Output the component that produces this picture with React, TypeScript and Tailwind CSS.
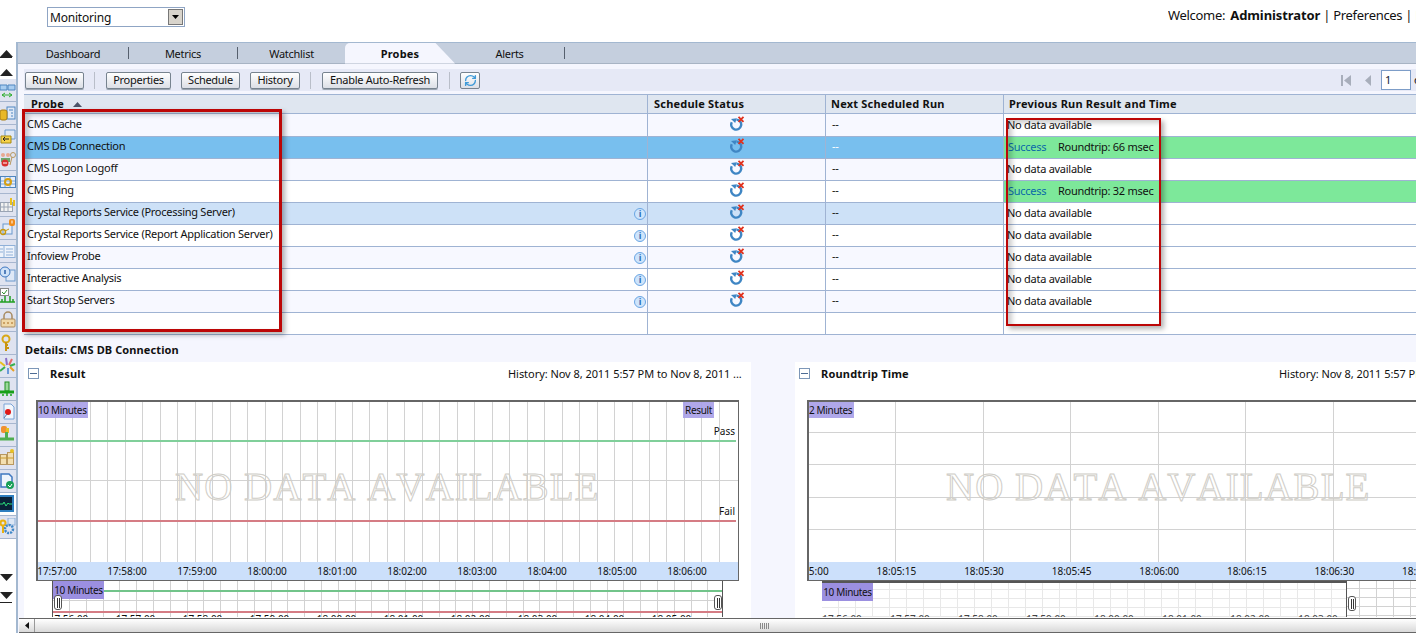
import { RefreshCw } from "lucide-react"
import type { ReactNode } from "react"

const probes = [
  { name: "CMS Cache", info: false, result: null },
  { name: "CMS DB Connection", info: false, result: "66" },
  { name: "CMS Logon Logoff", info: false, result: null },
  { name: "CMS Ping", info: false, result: "32" },
  { name: "Crystal Reports Service (Processing Server)", info: true, result: null },
  { name: "Crystal Reports Service (Report Application Server)", info: true, result: null },
  { name: "Infoview Probe", info: true, result: null },
  { name: "Interactive Analysis", info: true, result: null },
  { name: "Start Stop Servers", info: true, result: null },
]

const railIcons: ReactNode[] = [
  <g key="1"><path d="M0 4h7v5H0zM8 4h7v5H8z" fill="#a9cdf0" stroke="#4f86c0" /><path d="M2 14h10M2 14l3-2M2 14l3 2M12 14l-3-2M12 14l-3 2" stroke="#2fae2f" fill="none" /></g>,
  <g key="2"><rect x="7" y="3" width="8" height="12" fill="#dfe8f6" stroke="#4f86c0" /><path d="M9 6h4M11 9h2M11 12h2" stroke="#4f86c0" /><rect x="0" y="6" width="7" height="10" rx="2" fill="#e8b828" stroke="#a87c10" /></g>,
  <g key="3"><path d="M5 3h10v9H5z" fill="#dfe8f6" stroke="#6a98cc" /><path d="M1 9h10v7H1z" fill="#f6d34a" stroke="#a88a10" /><path d="M3 12h6M3 12l2-2M3 12l2 2" stroke="#222" fill="none" /></g>,
  <g key="4"><circle cx="3" cy="5" r="2" fill="#e8a890" /><circle cx="8" cy="5" r="2" fill="#e8a890" /><path d="M1 8h9v4H1z" fill="#6aa86a" /><circle cx="5" cy="13" r="3.5" fill="#d83030" /><path d="M3 13h4" stroke="#fff" /><circle cx="13" cy="5" r="2.5" fill="none" stroke="#b89860" /><path d="M12 7l-2 8" stroke="#b89860" /></g>,
  <g key="5"><rect x="0.5" y="3.5" width="15" height="11" fill="#e6eefa" stroke="#4f86c0" /><path d="M5 4v10M10 4v10M1 8h14M1 11h14" stroke="#7aa4d8" /><circle cx="8" cy="9" r="3" fill="none" stroke="#d8a010" strokeWidth="2" /></g>,
  <g key="6"><rect x="0.5" y="6.5" width="12" height="9" fill="#f2f2f2" stroke="#9aa4b4" /><path d="M4 7v8M8 7v8M1 11h11" stroke="#9aa4b4" /><path d="M10 2h2v7h-2zM13 4h2v6h-2z" fill="#e8c020" /></g>,
  <g key="7"><rect x="3" y="5" width="9" height="10" fill="#e4ecf8" stroke="#6a98cc" /><rect x="9" y="0" width="6" height="7" rx="2" fill="#f08c1c" /><rect x="11.5" y="1.5" width="1" height="3" fill="#fff" /><circle cx="3" cy="13" r="2.5" fill="none" stroke="#c89a10" strokeWidth="1.5" /><path d="M5 12l4-2" stroke="#c89a10" /></g>,
  <g key="8"><rect x="-2" y="3.5" width="17" height="12" fill="#eef3fb" stroke="#8fb0d8" /><path d="M4 4v11" stroke="#8fb0d8" /><path d="M6 7h7M6 10h7M6 13h7M-1 7h4M-1 10h4" stroke="#8fb0d8" /></g>,
  <g key="9"><rect x="6" y="5" width="9" height="11" fill="#dfe8f6" stroke="#6a98cc" /><circle cx="5" cy="7" r="5" fill="#cfe2f8" stroke="#3f78c0" /><path d="M5 5v4" stroke="#2a5ea8" strokeWidth="1.5" /></g>,
  <g key="10"><rect x="0.5" y="0.5" width="8" height="7" fill="#fff" stroke="#888" /><path d="M2 4l2 2 3-4" stroke="#309030" fill="none" /><path d="M0 14h15M5 8v6M10 8v6M2 11v3M13 11v3" stroke="#22a022" strokeWidth="1.5" /></g>,
  <g key="11"><path d="M4 8V5a4 4 0 0 1 8 0v3" fill="none" stroke="#a88a60" strokeWidth="1.5" /><rect x="1" y="8" width="14" height="8" rx="1" fill="#f0d8a8" stroke="#a88a60" /><path d="M3 12h2M7 12h2M11 12h2" stroke="#a86a20" /></g>,
  <g key="12"><circle cx="6" cy="5" r="3.5" fill="none" stroke="#d8a818" strokeWidth="2" /><path d="M6 8v9M6 14h3M6 11h2" stroke="#c89410" strokeWidth="2" /></g>,
  <g key="13"><path d="M7 8l-1-7" stroke="#8a70c8" strokeWidth="2" /><path d="M9 8l3-6" stroke="#e86a6a" strokeWidth="2" /><path d="M5 9L0 5" stroke="#e8c020" strokeWidth="2" /><path d="M10 9l5-2" stroke="#38b050" strokeWidth="2" /><path d="M5 10l-5 4" stroke="#38b050" strokeWidth="2" /><path d="M10 10l4 4" stroke="#e8a020" strokeWidth="2" /><path d="M8 11v6" stroke="#6a9ad8" strokeWidth="2" /></g>,
  <g key="14"><rect x="5" y="2" width="4" height="9" fill="#9ad89a" stroke="#1f8f1f" /><path d="M0 12h14" stroke="#18a018" strokeWidth="3" /><path d="M7 11v5M3 14v2M11 14v2" stroke="#18a018" strokeWidth="1.5" /></g>,
  <g key="15"><path d="M4 1h7l3 3v12H4z" fill="#f2f6fc" stroke="#7aa4d8" /><circle cx="8" cy="9" r="3" fill="#e01818" /><path d="M7 11l-3 4" stroke="#5a78a8" /></g>,
  <g key="16"><rect x="1" y="0" width="6" height="7" rx="2" fill="#f09030" /><path d="M6 2h3v5H6z" fill="#e8c020" /><rect x="5" y="6" width="3" height="6" fill="#4fae4f" /><path d="M0 13h14" stroke="#4fae4f" strokeWidth="3" /></g>,
  <g key="17"><rect x="0.5" y="5.5" width="6" height="10" fill="#f3dfb0" stroke="#b89860" /><rect x="7.5" y="3.5" width="6" height="12" fill="#f3dfb0" stroke="#b89860" /><path d="M0 9h14" stroke="#c89a30" /><circle cx="12" cy="2" r="2" fill="#e8c020" /></g>,
  <g key="18"><path d="M1 2h8l3 3v10H1z" fill="#eef4fc" stroke="#3f78c0" strokeWidth="1.5" /><circle cx="10" cy="13" r="4" fill="#18a058" /><path d="M8 13l2 2 2-3" stroke="#fff" fill="none" /></g>,
  <g key="19"><rect x="-2" y="1" width="15" height="15" fill="#0a2238" stroke="#2f7fc0" strokeWidth="2" /><path d="M0 9h3l1-2 2 4 2-3 1 1h3" stroke="#28d878" fill="none" /></g>,
  <g key="20"><rect x="8" y="0" width="7" height="7" fill="#dce6f4" stroke="#8fb0d8" /><circle cx="3" cy="5" r="2.5" fill="none" stroke="#e8b010" strokeWidth="2" /><path d="M3 7v8" stroke="#e8b010" strokeWidth="2" /><circle cx="9" cy="11" r="4" fill="none" stroke="#3f88c8" strokeWidth="2.5" strokeDasharray="2 1" /></g>,
]

function Triangle({ down = false }: { down?: boolean }) {
  return (
    <svg width="13" height="7" viewBox="0 0 13 7" className="block">
      <path d={down ? "M0 0h13L6.5 7z" : "M6.5 0L13 7H0z"} fill="#222" />
    </svg>
  )
}

function LeftRail() {
  return (
    <div className="flex w-[16px] shrink-0 flex-col overflow-hidden bg-white">
      <div className="flex h-[37px] flex-col">
        <div className="mt-[8px]">
          <Triangle />
        </div>
        <div className="h-px w-[12px] bg-[#222]" />
        <div className="mt-[11px]">
          <Triangle />
        </div>
      </div>
      {railIcons.map((icon, i) => (
        <div
          key={i}
          className={`flex h-[23px] shrink-0 items-center overflow-hidden border-b border-[#a7b6cf] ${
            i === 18 ? "bg-white" : "bg-[#dfe3f0]"
          }`}
        >
          <svg width="16" height="18" viewBox="0 0 16 18" className="block">
            {icon}
          </svg>
        </div>
      ))}
      <div className="mt-[35px]">
        <Triangle down />
      </div>
      <div className="mt-[11px]">
        <Triangle down />
      </div>
      <div className="mt-[3px] h-px w-[12px] bg-[#222]" />
    </div>
  )
}

function Tab({ label, className, sep = true }: { label: string; className: string; sep?: boolean }) {
  return (
    <div className={`flex h-[20px] shrink-0 items-center justify-center ${className}`}>
      <span className="flex-1 pt-[2px] text-center">{label}</span>
      {sep && <span className="h-[12px] w-px bg-[#56606e]" />}
    </div>
  )
}

function ToolButton({ label, className }: { label: string; className: string }) {
  return (
    <button
      className={`flex h-[17px] items-center justify-center rounded-[2px] border border-[#77838f] bg-gradient-to-b from-white to-[#dcdfe6] text-[11px] text-[#111] shadow-[0_1px_0_#9aa4b0] ${className}`}
    >
      {label}
    </button>
  )
}

function ToolSep({ className }: { className: string }) {
  return <span className={`h-[17px] w-px bg-[#b9bec9] ${className}`} />
}

function Toolbar() {
  return (
    <div className="mt-[5px] flex h-[22px] shrink-0 items-center bg-[#e6e9f6] pl-px">
      <ToolButton label="Run Now" className="w-[59px]" />
      <ToolSep className="ml-[10px]" />
      <ToolButton label="Properties" className="ml-[11px] w-[65px]" />
      <ToolButton label="Schedule" className="ml-[10px] w-[59px]" />
      <ToolButton label="History" className="ml-[10px] w-[50px]" />
      <ToolSep className="ml-[10px]" />
      <ToolButton label="Enable Auto-Refresh" className="ml-[11px] w-[116px]" />
      <ToolSep className="ml-[11px]" />
      <button className="ml-[10px] flex h-[17px] w-[20px] items-center justify-center rounded-[2px] border border-[#77838f] bg-gradient-to-b from-white to-[#dcdfe6]">
        <RefreshCw size={13} strokeWidth={2.5} className="text-[#3f9ad8]" />
      </button>
      <svg width="10" height="11" viewBox="0 0 10 11" className="ml-auto">
        <path d="M0 0h2v11H0zM10 0v11L3 5.5z" fill="#a8aebb" />
      </svg>
      <svg width="6" height="11" viewBox="0 0 6 11" className="ml-[14px]">
        <path d="M6 0v11L0 5.5z" fill="#a8aebb" />
      </svg>
      <div className="ml-[10px] flex h-[20px] w-[30px] items-center border border-[#7d9dc8] bg-white pl-[3px] text-[11px] text-[#123]">
        1
      </div>
      <span className="ml-[3px] w-[2px] overflow-hidden text-[11px]">of</span>
    </div>
  )
}

function ScheduleIcon() {
  return (
    <svg width="16" height="15" viewBox="0 0 16 15" className="-mt-[4px] block">
      <path d="M7.5 3.6A5 5 0 1 1 2.8 6.2" fill="none" stroke="#3f86c4" strokeWidth="2.4" />
      <path d="M2 3l5.8-.8-1.6 4.8z" fill="#3f86c4" />
      <path d="M9.5 0.8l5 5M14.5 0.8l-5 5" stroke="#e0301c" strokeWidth="1.8" />
    </svg>
  )
}

function InfoIcon() {
  return (
    <span className="mr-[1px] mt-[2px] flex h-[12px] w-[12px] items-center justify-center rounded-full border border-[#6aa6e4] bg-[#cfe4fb] text-[9px] font-bold leading-none text-[#2d6fb8]">
      i
    </span>
  )
}

const cell = "flex items-center border-r border-[#9fb3d3]"

function ProbeTable() {
  return (
    <div className="mt-[3px] shrink-0 text-[11px] text-[#111]">
      <div className="grid h-[20px] grid-cols-[624px_178px_178px_1fr] border-y border-[#9fb3d3] bg-[#dfe6f0] font-bold tracking-[0.2px]">
        <div className={`${cell} pl-[7px]`}>
          Probe
          <svg width="9" height="5" viewBox="0 0 9 5" className="ml-[9px]">
            <path d="M4.5 0L9 5H0z" fill="#4c5468" />
          </svg>
        </div>
        <div className={`${cell} pl-[6px]`}>Schedule Status</div>
        <div className={`${cell} pl-[5px]`}>Next Scheduled Run</div>
        <div className="flex items-center pl-[5px]">Previous Run Result and Time</div>
      </div>
      {[...probes, null].map((p, i) => {
        const selected = i === 1
        const hover = i === 4
        const bg = selected ? "bg-[#78bfee]" : hover ? "bg-[#cde1f7]" : i % 2 === 0 ? "bg-[#f7f8ff]" : "bg-white"
        return (
          <div
            key={i}
            className={`grid grid-cols-[624px_178px_178px_1fr] border-b border-[#9fb3d3] ${i === 0 ? "h-[23px]" : "h-[22px]"} ${bg}`}
          >
            <div className={`${cell} justify-between pb-[2px] pl-[3px]`}>
              <span>{p?.name}</span>
              {p?.info && <InfoIcon />}
            </div>
            <div className={`${cell} justify-center`}>{p && <ScheduleIcon />}</div>
            <div className={`${cell} pb-[2px] pl-[6px] ${selected ? "text-white" : ""}`}>{p && "--"}</div>
            {p?.result ? (
              <div className="flex items-center bg-[#7de89a] pl-[4px]">
                <span className="w-[50px] text-[#0a68a8]">Success</span>
                <span>Roundtrip: {p.result} msec</span>
              </div>
            ) : (
              <div className="flex items-center bg-white pl-[3px]">{p && "No data available"}</div>
            )}
          </div>
        )
      })}
    </div>
  )
}

function Handle({ className }: { className: string }) {
  return (
    <span className={`absolute flex h-[15px] w-[8px] items-center justify-center gap-px rounded-[3px] border border-[#555] bg-white ${className}`}>
      <span className="h-[10px] w-px bg-[#333]" />
      <span className="h-[10px] w-px bg-[#333]" />
    </span>
  )
}

function range(start: number, end: number, step: number) {
  const out: number[] = []
  for (let x = start; x < end; x += step) out.push(Math.round(x))
  return out
}

function Grid({
  xs,
  ys,
  width,
  height,
  color = "#d2d2d2",
}: {
  xs: number[]
  ys: number[]
  width: number
  height: number
  color?: string
}) {
  return (
    <svg width={width} height={height} className="absolute left-0 top-0" shapeRendering="crispEdges">
      {xs.map((x) => (
        <line key={x} x1={x + 0.5} x2={x + 0.5} y1={0} y2={height} stroke={color} />
      ))}
      {ys.map((y) => (
        <line key={y} x1={0} x2={width} y1={y + 0.5} y2={y + 0.5} stroke={color} />
      ))}
    </svg>
  )
}

function NoData({ className }: { className: string }) {
  return (
    <span
      className={`absolute whitespace-nowrap text-[39px] leading-none tracking-[1px] text-transparent [font-family:'Liberation_Serif',serif] [font-kerning:none] [-webkit-text-stroke:1px_#cfcdc7] ${className}`}
    >
      NO DATA AVAILABLE
    </span>
  )
}

function PurpleLabel({ children, className }: { children: ReactNode; className: string }) {
  return (
    <span className={`absolute top-0 flex h-[16px] items-center whitespace-nowrap bg-[#a79ee8]/90 text-[10px] tracking-[-0.35px] text-[#111] ${className}`}>
      {children}
    </span>
  )
}

function Panel({ title, children }: { title: string; children: ReactNode }) {
  return (
    <div className="flex w-[727px] shrink-0 flex-col overflow-hidden bg-white">
      <div className="flex h-[38px] shrink-0 items-start pt-[4px] text-[11px]">
        <span className="ml-[4px] mt-[2px] flex h-[11px] w-[11px] items-center justify-center border border-[#7d97b8]">
          <span className="h-px w-[7px] bg-[#4d6c94]" />
        </span>
        <span className="ml-[11px] font-bold tracking-[0.2px]">{title}</span>
        <span className="ml-auto mr-[10px] w-[233px] whitespace-nowrap text-right tracking-[-0.05px] text-[#111]">
          History: Nov 8, 2011 5:57 PM to Nov 8, 2011 ...
        </span>
      </div>
      {children}
    </div>
  )
}

function ResultPanel() {
  const labels = ["17:57:00", "17:58:00", "17:59:00", "18:00:00", "18:01:00", "18:02:00", "18:03:00", "18:04:00", "18:05:00", "18:06:00"]
  const ticks = ["17:56:00", "17:57:00", "17:58:00", "17:59:00", "18:00:00", "18:01:00", "18:02:00", "18:03:00", "18:04:00", "18:05:00"]
  return (
    <Panel title="Result">
      <div className="ml-[12px] flex h-[181px] w-[703px] shrink-0 flex-col overflow-hidden border-b border-l-2 border-r border-t-2 border-[#666]">
        <div className="relative h-[160px] shrink-0 overflow-hidden bg-white text-[10px] tracking-normal">
          <Grid xs={range(17, 698, 17.47)} ys={[78]} width={700} height={160} />
          <div className="absolute left-0 top-[38px] h-[2px] w-[698px] bg-[#80cf9a]" />
          <div className="absolute left-0 top-[118px] h-[2px] w-[698px] bg-[#d57c84]" />
          <NoData className="left-[137px] top-[65px]" />
          <PurpleLabel className="left-0 w-[50px]">10 Minutes</PurpleLabel>
          <PurpleLabel className="left-[645px] w-[31px] justify-center">Result</PurpleLabel>
          <span className="absolute right-[3px] top-[22px]">Pass</span>
          <span className="absolute right-[3px] top-[102px]">Fail</span>
        </div>
        <div className="-ml-[16px] flex h-[18px] shrink-0 items-center bg-[#cce0fb] pt-px text-[10px] tracking-normal text-[#111]">
          {labels.map((l) => (
            <span key={l} className="w-[70px] shrink-0 text-center">
              {l}
            </span>
          ))}
        </div>
      </div>
      <div className="relative ml-[28px] h-[36px] w-[671px] shrink-0 overflow-hidden border-l border-r border-[#555] bg-white text-[10px] tracking-normal">
        <Grid xs={range(16, 670, 16.8)} ys={[19]} width={670} height={36} />
        <div className="absolute left-0 top-[9px] h-[2px] w-full bg-[#72c48a]" />
        <div className="absolute left-0 top-[30px] h-[2px] w-full bg-[#d57c84]" />
        <PurpleLabel className="left-0 !h-[18px] w-[51px] justify-center !bg-[#9b8fe0]">10 Minutes</PurpleLabel>
        <Handle className="left-[1px] top-[14px]" />
        <Handle className="right-0 top-[14px]" />
        <div className="absolute left-[-18px] top-[31px] flex">
          {ticks.map((t) => (
            <span key={t} className="w-[67px] text-center">
              {t}
            </span>
          ))}
        </div>
      </div>
    </Panel>
  )
}

function RoundtripPanel() {
  const labels = ["18:05:00", "18:05:15", "18:05:30", "18:05:45", "18:06:00", "18:06:15", "18:06:30", "18:06:45"]
  const ticks = ["17:56:00", "17:57:00", "17:58:00", "17:59:00", "18:00:00", "18:01:00", "18:02:00", "18:03:00", "18:04:00", "18:05:00"]
  return (
    <Panel title="Roundtrip Time">
      <div className="ml-[12px] flex h-[181px] w-[703px] shrink-0 flex-col overflow-hidden border-b border-l-2 border-r border-t-2 border-[#666]">
        <div className="relative h-[160px] shrink-0 overflow-hidden bg-white text-[10px] tracking-normal">
          <Grid xs={range(86, 700, 87.6)} ys={[30, 62, 95, 127]} width={700} height={160} />
          <NoData className="left-[137px] top-[65px]" />
          <PurpleLabel className="left-0 w-[45px]">2 Minutes</PurpleLabel>
        </div>
        <div className="flex h-[18px] shrink-0 items-center overflow-hidden bg-[#cce0fb] pt-px text-[10px] tracking-normal text-[#111]">
          <div className="-ml-[44px] flex">
            {labels.map((l) => (
              <span key={l} className="w-[87.6px] shrink-0 text-center">
                {l}
              </span>
            ))}
          </div>
        </div>
      </div>
      <div className="ml-[27px] flex h-[36px] shrink-0 text-[10px] tracking-normal">
        <div className="relative h-full w-[525px] shrink-0 overflow-hidden border-r border-t-2 border-[#555] bg-white">
          <Grid xs={range(16, 524, 17)} ys={[6, 15, 24, 33]} width={524} height={36} color="#e8e8e8" />
          <PurpleLabel className="left-0 !h-[18px] w-[51px] justify-center !bg-[#9b8fe0]">10 Minutes</PurpleLabel>
          <div className="absolute left-[-14px] top-[29px] flex text-[#444]">
            {ticks.map((t) => (
              <span key={t} className="w-[68px] text-center">
                {t}
              </span>
            ))}
          </div>
        </div>
        <div className="relative h-full w-[175px] shrink-0 overflow-hidden bg-white">
          <Grid xs={range(12, 175, 17)} ys={[7, 16, 25, 34]} width={175} height={36} />
          <Handle className="left-[1px] top-[15px]" />
        </div>
      </div>
    </Panel>
  )
}

function Scrollbar() {
  return (
    <div className="ml-px flex h-[15px] shrink-0 border-y border-[#666] bg-gradient-to-b from-white to-[#d9d9d9]">
      <div className="flex w-[16px] shrink-0 items-center justify-center border-r border-[#999]">
        <svg width="4" height="7" viewBox="0 0 4 7">
          <path d="M4 0v7L0 3.5z" fill="#111" />
        </svg>
      </div>
      <div className="flex w-[1458px] shrink-0 items-center justify-center gap-px rounded-l-[3px]">
        {[0, 1, 2, 3, 4].map((i) => (
          <span key={i} className="h-[6px] w-px bg-[#8a8a8a]" />
        ))}
      </div>
    </div>
  )
}

export default function App() {
  return (
    <div className="relative flex h-[633px] w-[1416px] flex-col overflow-hidden bg-white text-[11px] tracking-[-0.27px] text-[#111] [font-family:'Noto_Sans',sans-serif]">
      <header className="flex h-[42px] shrink-0 items-start">
        <div className="ml-[47px] mt-[7px] flex h-[20px] w-[138px] items-center border border-[#8fa5c4] pl-[2px] text-[12px] tracking-[-0.2px]">
          <span className="flex-1 pt-px">Monitoring</span>
          <span className="flex h-[16px] w-[15px] items-center justify-center border border-[#777] bg-[#d8d4cc]">
            <svg width="7" height="4" viewBox="0 0 7 4">
              <path d="M0 0h7L3.5 4z" fill="#000" />
            </svg>
          </span>
          <span className="w-px" />
        </div>
        <div className="ml-auto mt-[6px] w-[248px] overflow-hidden whitespace-nowrap text-[13px] leading-[18px] tracking-[-0.3px]">
          Welcome: <b className="ml-[2px] tracking-[-0.1px]">Administrator</b> | Preferences | Help
        </div>
      </header>

      <div className="flex min-h-0 flex-1">
        <LeftRail />
        <main className="flex min-w-0 flex-1 flex-col border-l-2 border-t border-[#a3b8d0] bg-[#f5f6fe]">
          <div className="flex h-[21px] shrink-0 items-center border-b border-[#a8b4c4] bg-[#c5cfde] text-[11px]">
            <Tab label="Dashboard" className="w-[111px]" />
            <Tab label="Metrics" className="w-[109px]" />
            <Tab label="Watchlist" className="w-[107px]" sep={false} />
            <div className="flex h-[21px] w-[110px] shrink-0 items-center justify-center rounded-tl-[5px] bg-[#f5f6fe] pt-[3px] font-bold tracking-[0.2px] [clip-path:polygon(0_0,90px_0,110px_100%,0_100%)]">
              Probes
            </div>
            <Tab label="Alerts" className="w-[110px]" />
          </div>
          <div className="flex min-h-0 flex-1 flex-col pl-[6px]">
            <Toolbar />
            <ProbeTable />
            <div className="flex h-[27px] shrink-0 items-center pl-px pt-[3px] font-bold tracking-[0.1px]">Details: CMS DB Connection</div>
            <div className="flex min-h-0 flex-1 gap-[44px] overflow-hidden">
              <ResultPanel />
              <RoundtripPanel />
            </div>
          </div>
          <Scrollbar />
        </main>
      </div>

      <div className="pointer-events-none absolute left-[22px] top-[109px] h-[223px] w-[260px] border-[3px] border-[#bc0606] shadow-[3px_3px_5px_rgba(0,0,0,0.3),inset_4px_3px_5px_rgba(0,0,0,0.2)]" />
      <div className="pointer-events-none absolute left-[1006px] top-[118px] h-[208px] w-[155px] border-2 border-[#bc0606] shadow-[3px_3px_5px_rgba(0,0,0,0.3),inset_4px_3px_5px_rgba(0,0,0,0.2)]" />
    </div>
  )
}
